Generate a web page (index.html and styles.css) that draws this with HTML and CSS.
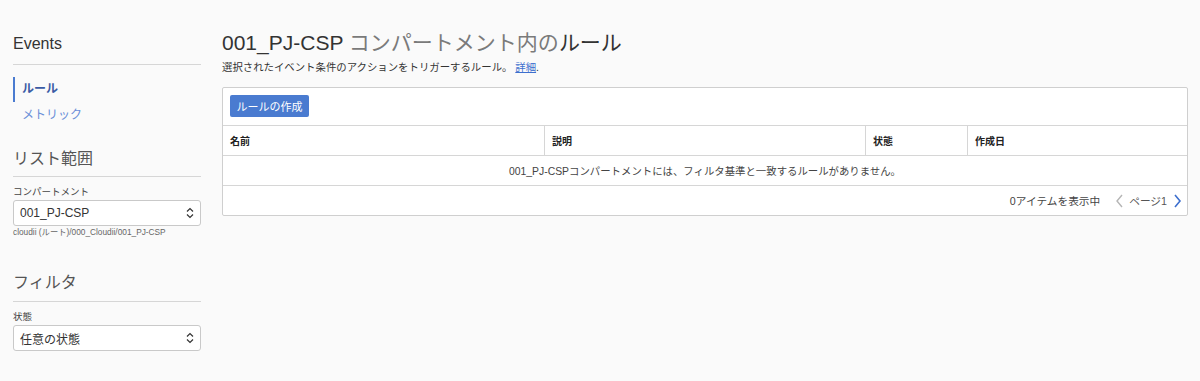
FILE: index.html
```html
<!DOCTYPE html>
<html lang="ja">
<head>
<meta charset="utf-8">
<title>Events ルール</title>
<link rel="stylesheet" href="styles.css">
</head>
<body>
<div class="page">
  <aside class="sidebar">
    <h2 class="side-title">Events</h2>
    <nav class="side-nav">
      <a class="nav-item active">ルール</a>
      <a class="nav-item">メトリック</a>
    </nav>
    <h2 class="side-title section">リスト範囲</h2>
    <label class="field-label">コンパートメント</label>
    <div class="select">
      <span>001_PJ-CSP</span>
      <svg class="chev" width="8" height="12" viewBox="0 0 8 12"><path d="M1 4.5 L4 1.5 L7 4.5 M1 7.5 L4 10.5 L7 7.5" fill="none" stroke="#333" stroke-width="1.2"/></svg>
    </div>
    <div class="helper">cloudii (ルート)/000_Cloudii/001_PJ-CSP</div>
    <h2 class="side-title section2">フィルタ</h2>
    <label class="field-label">状態</label>
    <div class="select">
      <span>任意の状態</span>
      <svg class="chev" width="8" height="12" viewBox="0 0 8 12"><path d="M1 4.5 L4 1.5 L7 4.5 M1 7.5 L4 10.5 L7 7.5" fill="none" stroke="#333" stroke-width="1.2"/></svg>
    </div>
  </aside>
  <main class="main">
    <h1 class="title"><span class="dark">001_PJ-CSP</span> コンパートメント内の<span class="dark">ルール</span></h1>
    <p class="subtitle">選択されたイベント条件のアクションをトリガーするルール。 <a class="link">詳細</a>.</p>
    <section class="panel">
      <div class="toolbar"><button class="btn">ルールの作成</button></div>
      <div class="row head">
        <div class="cell c1">名前</div>
        <div class="cell c2">説明</div>
        <div class="cell c3">状態</div>
        <div class="cell c4">作成日</div>
      </div>
      <div class="row empty">001_PJ-CSPコンパートメントには、フィルタ基準と一致するルールがありません。</div>
      <div class="footer">
        <span>0アイテムを表示中</span>
        <span class="pager">
          <svg width="9" height="14" viewBox="0 0 9 14"><path d="M7 1 L2 7 L7 13" fill="none" stroke="#b5b5b5" stroke-width="1.4"/></svg>
          <span class="pg">ページ1</span>
          <svg width="9" height="14" viewBox="0 0 9 14"><path d="M2 1 L7 7 L2 13" fill="none" stroke="#3d6fce" stroke-width="1.6"/></svg>
        </span>
      </div>
    </section>
  </main>
</div>
</body>
</html>
```
FILE: styles.css
```css
* { box-sizing: border-box; }
html, body {
  margin: 0;
  background: #fafafa;
  font-family: "Liberation Sans", Arial, "Noto Sans CJK JP", sans-serif;
  color: #333;
}
.page {
  display: flex;
  gap: 21px;
  padding: 0 12px 0 13px;
}
.sidebar {
  width: 188px;
  flex: none;
  padding-top: 33px;
}
.side-title {
  margin: 0;
  font-size: 16px;
  font-weight: normal;
  line-height: 22px;
  color: #333;
  padding-bottom: 9px;
  border-bottom: 1px solid #d6d6d6;
}
.side-title.section { margin-top: 20px; color: #555; padding-bottom: 6px; }
.side-title.section2 { margin-top: 35px; color: #555; padding-bottom: 7px; }
.side-nav {
  display: flex;
  flex-direction: column;
  padding-top: 12px;
}
.nav-item {
  font-size: 12px;
  line-height: 25px;
  padding-left: 7px;
  color: #6a8fd8;
  border-left: 2px solid transparent;
}
.nav-item.active {
  color: #3a5ba5;
  font-weight: bold;
  border-left-color: #4a7bd0;
}
.nav-item + .nav-item { margin-top: 1px; }
.field-label {
  display: block;
  font-size: 9.5px;
  color: #444;
  margin-top: 9px;
  line-height: 12px;
  margin-bottom: 2px;
}
.select {
  height: 26px;
  background: #fff;
  border: 1px solid #c9c9c9;
  border-radius: 3px;
  display: flex;
  align-items: center;
  justify-content: space-between;
  padding: 0 6px 0 6px;
  font-size: 12px;
  color: #333;
}
.chev { display: block; }
.helper {
  font-size: 8.3px;
  color: #666;
  margin-top: 1px;
  line-height: 10px;
}
.main {
  flex: 1;
  padding-top: 28px;
}
.title {
  margin: 0;
  font-size: 21px;
  font-weight: normal;
  line-height: 30px;
  color: #7a7a7a;
}
.title .dark { color: #333; }
.subtitle {
  margin: 3px 0 0;
  font-size: 10.4px;
  line-height: 14px;
  color: #333;
}
.link { color: #3d6fce; text-decoration: underline; }
.panel {
  margin-top: 12px;
  background: #fff;
  border: 1px solid #cfcfcf;
  border-radius: 2px;
}
.toolbar {
  height: 38px;
  padding: 7px 7px;
  border-bottom: 1px solid #d6d6d6;
}
.btn {
  height: 22px;
  width: 79px;
  background: #4a7bd0;
  color: #fff;
  border: none;
  border-radius: 2px;
  font-family: inherit;
  font-size: 11px;
  padding: 0;
}
.row {
  display: flex;
  border-bottom: 1px solid #d6d6d6;
}
.row.head { height: 30px; }
.cell {
  display: flex;
  align-items: center;
  padding-left: 7px;
  font-size: 10px;
  font-weight: bold;
  color: #222;
}
.c1 { width: 322px; border-right: 1px solid #d6d6d6; }
.c2 { width: 321px; border-right: 1px solid #d6d6d6; }
.c3 { width: 102px; border-right: 1px solid #d6d6d6; }
.c4 { flex: 1; }
.row.empty {
  height: 30px;
  align-items: center;
  justify-content: center;
  font-size: 10.4px;
  color: #444;
}
.footer {
  height: 29px;
  display: flex;
  align-items: center;
  justify-content: flex-end;
  padding-right: 5px;
  font-size: 10.7px;
  color: #444;
  gap: 15px;
}
.pager {
  display: flex;
  align-items: center;
  gap: 5px;
}
.pg { color: #555; margin-right: 1px; }
```
